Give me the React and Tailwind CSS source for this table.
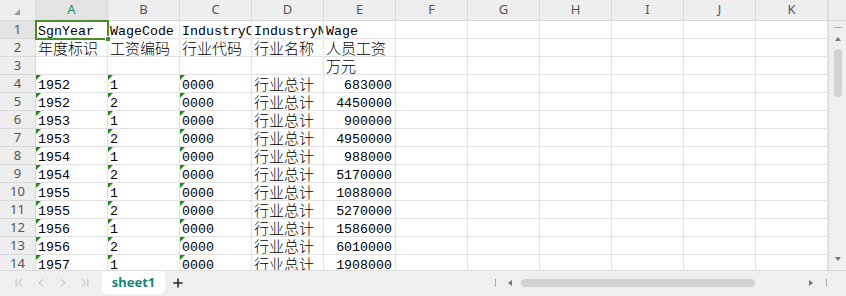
import React from 'react';
import { ChevronFirst, ChevronLeft, ChevronRight, ChevronLast, Plus } from 'lucide-react';

const cols = ['A', 'B', 'C', 'D', 'E', 'F', 'G', 'H', 'I', 'J', 'K'];

const rows = [
  ['SgnYear', 'WageCode', 'IndustryCode', 'IndustryName', 'Wage'],
  ['年度标识', '工资编码', '行业代码', '行业名称', '人员工资'],
  ['', '', '', '', '万元'],
  ['1952', '1', '0000', '行业总计', '683000'],
  ['1952', '2', '0000', '行业总计', '4450000'],
  ['1953', '1', '0000', '行业总计', '900000'],
  ['1953', '2', '0000', '行业总计', '4950000'],
  ['1954', '1', '0000', '行业总计', '988000'],
  ['1954', '2', '0000', '行业总计', '5170000'],
  ['1955', '1', '0000', '行业总计', '1088000'],
  ['1955', '2', '0000', '行业总计', '5270000'],
  ['1956', '1', '0000', '行业总计', '1586000'],
  ['1956', '2', '0000', '行业总计', '6010000'],
  ['1957', '1', '0000', '行业总计', '1908000'],
];

const isCjk = (s) => /[\u4e00-\u9fff]/.test(s);

const Cell = ({ value, rowIdx, colIdx }) => {
  const numeric = rowIdx >= 3 && colIdx === 4;
  const textFlag = rowIdx >= 3 && colIdx < 3;
  const cjk = isCjk(value);
  return (
    <div className="relative h-[18px] w-[72px] border-r border-b border-[#e2e2e2] bg-white overflow-hidden">
      {textFlag && (
        <svg className="absolute left-0 top-0" width="5" height="5" viewBox="0 0 5 5">
          <polygon points="0,0 5,0 0,5" fill="#1a8a1a" />
        </svg>
      )}
      <div
        className={`h-[17px] whitespace-nowrap text-black ${numeric ? 'text-right pr-[3px]' : 'pl-[2px]'} ${
          cjk
            ? "text-[15px] leading-[16px] pt-[1px] font-['Noto_Sans_CJK_SC',sans-serif] font-light"
            : "text-[13.3px] leading-[17px] pt-[2px] font-['Liberation_Mono',monospace]"
        }`}
      >
        {value}
      </div>
    </div>
  );
};

const App = () => {
  return (
    <div className="w-[846px] h-[296px] flex flex-col bg-white overflow-hidden font-['Noto_Sans',sans-serif]">
      <div className="flex h-[270px] overflow-hidden">
        <div className="w-[828px] flex flex-col">
          {/* column header */}
          <div className="flex h-[21px]">
            <div className="w-[36px] h-[21px] bg-[#eeeeee] border-r border-b border-[#d9d9d9] flex items-end justify-end pr-[15px] pb-[5px]">
              <svg width="6" height="6" viewBox="0 0 6 6">
                <polygon points="6,0 6,6 0,6" fill="#9a9a9a" />
              </svg>
            </div>
            {cols.map((c) => (
              <div
                key={c}
                className={`w-[72px] h-[21px] border-r border-b border-[#d9d9d9] flex items-center justify-center text-[13px] ${
                  c === 'A' ? 'bg-[#e3e3e3] text-[#1f8c63]' : 'bg-[#eeeeee] text-[#555]'
                }`}
              >
                {c}
              </div>
            ))}
          </div>
          {rows.map((r, ri) => (
            <div key={ri} className="flex h-[18px]">
              <div
                className={`w-[36px] h-[18px] border-r border-b border-[#d9d9d9] flex items-center justify-center text-[13px] text-[#555] ${
                  ri === 0 ? 'bg-[#e3e3e3]' : 'bg-[#eeeeee]'
                }`}
              >
                {ri + 1}
              </div>
              {cols.map((c, ci) => (
                <div key={c} className={`relative ${ri === 0 && ci === 0 ? 'z-10' : ''}`}>
                  <Cell value={r[ci] || ''} rowIdx={ri} colIdx={ci} />
                  {ri === 0 && ci === 0 && (
                    <div className="absolute -left-[1px] -top-[1px] w-[74px] h-[20px] border-2 border-[#4b8a2e] pointer-events-none">
                      <div className="absolute -right-[4px] -bottom-[4px] w-[6px] h-[6px] bg-[#4b8a2e] border border-white" />
                    </div>
                  )}
                </div>
              ))}
            </div>
          ))}
        </div>
        {/* vertical scrollbar */}
        <div className="w-[18px] flex flex-col items-center bg-[#efefef] border-l border-[#dedede]">
          <div className="h-[21px] w-full bg-[#eeeeee] border-b border-[#d9d9d9]" />
          <div className="mt-[6px] w-[8px] h-[1px] bg-[#aaaaaa]" />
          <div className="mt-[9px] w-0 h-0 border-l-[3px] border-r-[3px] border-b-[4px] border-l-transparent border-r-transparent border-b-[#777]" />
          <div className="mt-[8px] w-[8px] h-[48px] rounded-full bg-[#d2d2d2]" />
          <div className="flex-1" />
          <div className="mb-[9px] w-0 h-0 border-l-[3px] border-r-[3px] border-t-[4px] border-l-transparent border-r-transparent border-t-[#777]" />
        </div>
      </div>
      {/* bottom bar */}
      <div className="flex-1 flex items-start bg-[#efefef] border-t border-[#dcdcdc]">
        <div className="flex items-center h-[24px] pl-[12px] gap-[8px] text-[#b0b0b0]">
          <ChevronFirst size={14} strokeWidth={1.6} />
          <ChevronLeft size={14} strokeWidth={1.6} />
          <ChevronRight size={14} strokeWidth={1.6} />
          <ChevronLast size={14} strokeWidth={1.6} />
        </div>
        <div className="ml-[10px] w-[63px] h-[23px] bg-white rounded-b-[5px] flex items-center justify-center text-[13px] font-bold text-[#12867f]">
          sheet1
        </div>
        <div className="ml-[6px] h-[24px] flex items-center text-[#222]">
          <Plus size={14} strokeWidth={2.6} />
        </div>
        <div className="flex-1" />
        <div className="h-[24px] flex items-center">
          <div className="w-[1px] h-[8px] bg-[#aaaaaa]" />
          <div className="ml-[12px] w-0 h-0 border-t-[3px] border-b-[3px] border-r-[4px] border-t-transparent border-b-transparent border-r-[#777]" />
          <div className="ml-[9px] w-[234px] h-[8px] rounded-full bg-[#d2d2d2]" />
          <div className="ml-[54px] w-0 h-0 border-t-[3px] border-b-[3px] border-l-[4px] border-t-transparent border-b-transparent border-l-[#777]" />
          <div className="ml-[13px] w-[1px] h-[8px] bg-[#aaaaaa]" />
        </div>
        <div className="w-[19px]" />
      </div>
    </div>
  );
};

export default App;
